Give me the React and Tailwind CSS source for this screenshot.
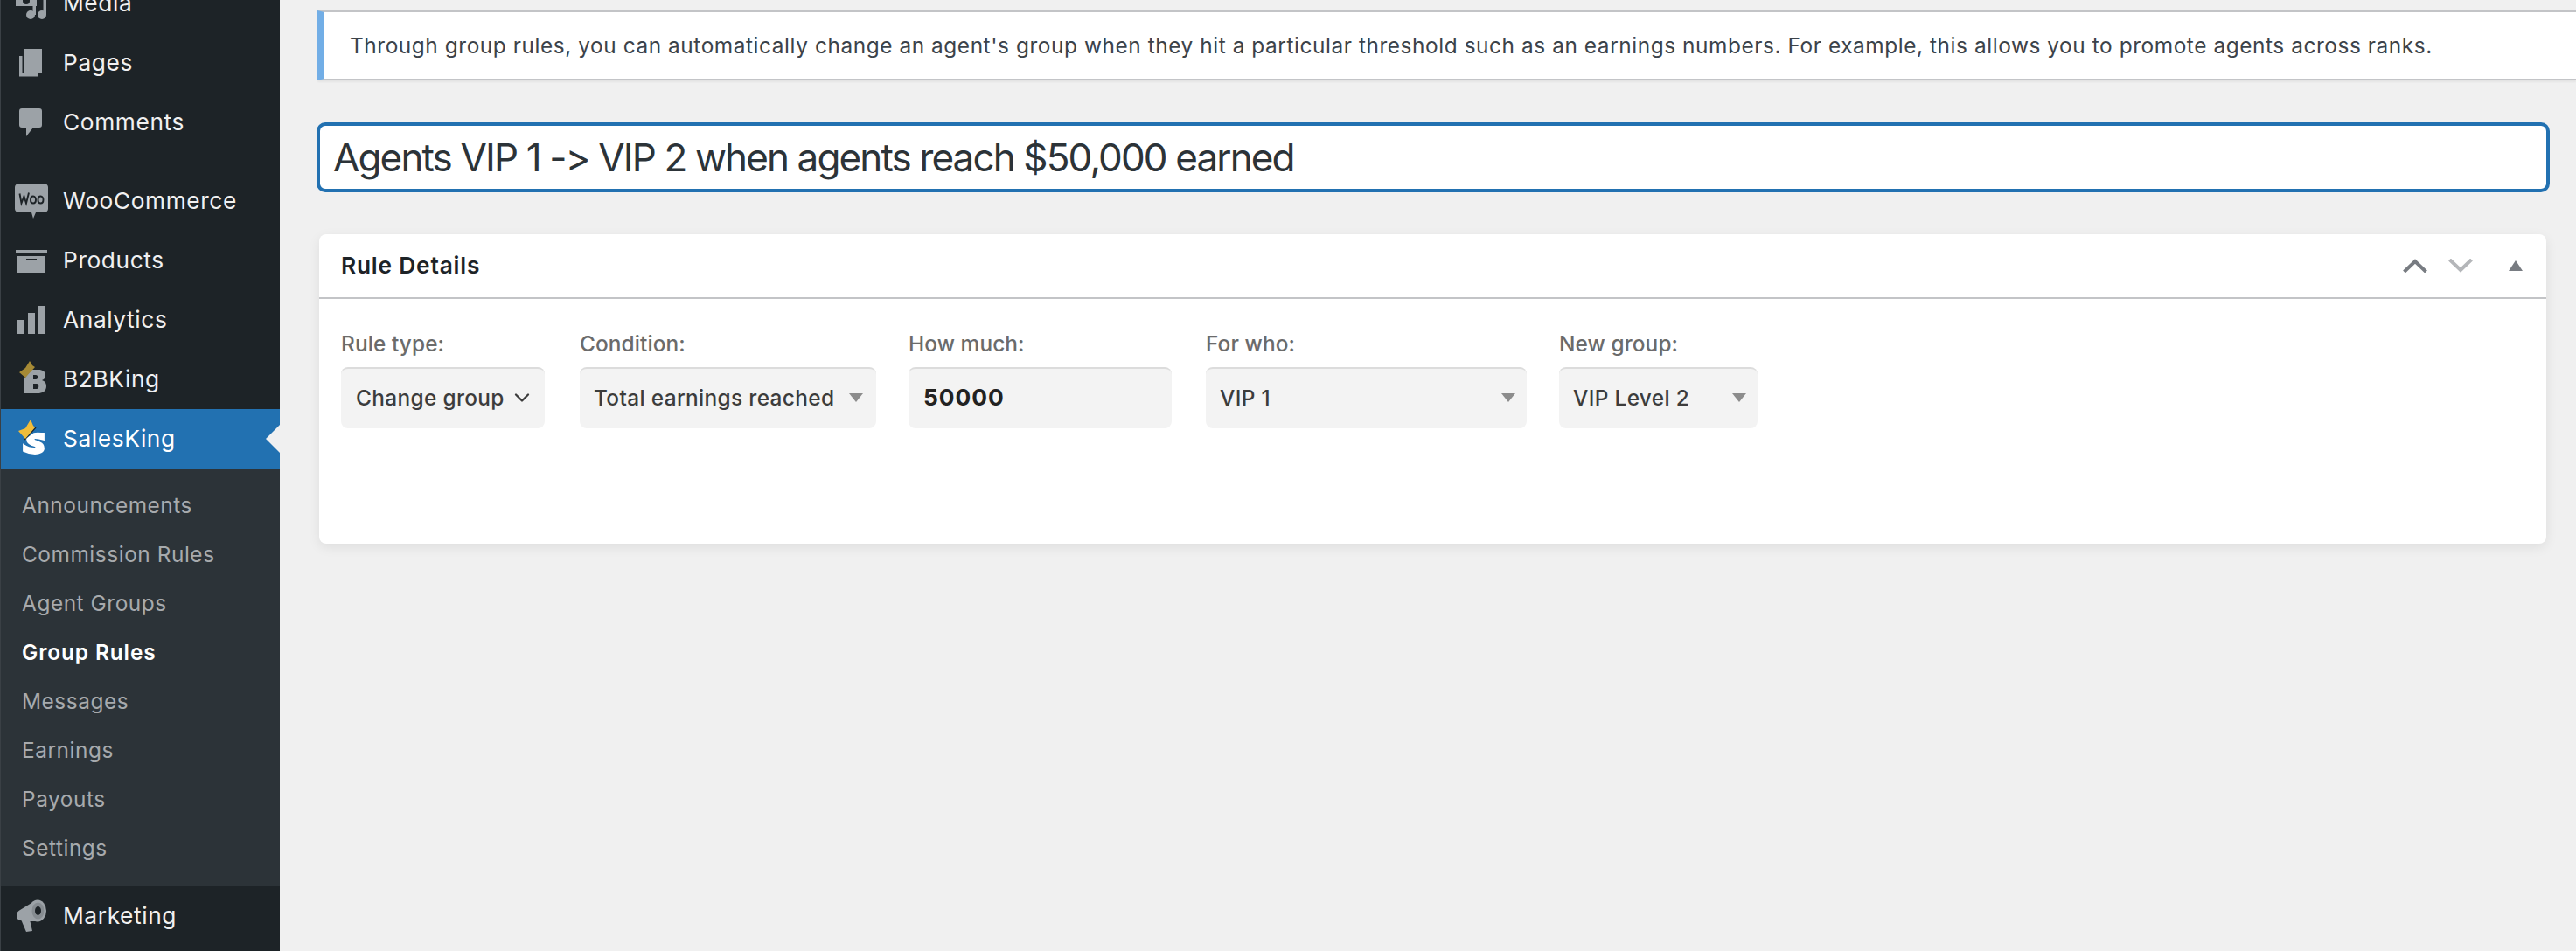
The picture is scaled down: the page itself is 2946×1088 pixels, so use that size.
import React from "react";
import { ChevronDown } from "lucide-react";

const MediaIcon = () => (
    <svg viewBox="0 0 40 40" className="w-10 h-10 fill-[#9ca2a7]">
        <path d="M3 0h24v23H3z" />
        <circle cx="15" cy="17" r="4" className="fill-[#1d2327]" />
        <circle cx="20" cy="33" r="5" />
        <circle cx="33" cy="33" r="5" />
        <path d="M22.5 20h3.500v13h-3.500zM34.500 2h3.500v31h-3.500z" />
    </svg>
);

const PagesIcon = () => (
    <svg viewBox="0 0 40 40" className="w-10 h-10 fill-[#9ca2a7]">
        <path d="M12 4h21v27H12z" />
        <path d="M7 12h3.500v20H28v3.500H7z" />
    </svg>
);

const CommentsIcon = () => (
    <svg viewBox="0 0 40 40" className="w-10 h-10 fill-[#9ca2a7]">
        <path d="M10 4h20c2 0 3 1 3 3v16c0 2-1 3-3 3h-7l-8 10V26h-5c-2 0-3-1-3-3V7c0-2 1-3 3-3z" />
    </svg>
);

const WooIcon = () => (
    <svg viewBox="0 0 40 40" className="w-10 h-10">
        <path
            className="fill-[#9ca2a7]"
            d="M6 0h30c2 0 4 2 4 4v25c0 2-2 4-4 4H26l-3 7-2-7H6c-2 0-4-2-4-4V4c0-2 2-4 4-4z"
        />
        <path
            className="fill-none stroke-[#1d2327]"
            strokeWidth="1.900"
            d="M7.500 11.500l2 11 3-8 2.500 8 3-12M23 14.500c-2.500 0-3 3-3 4.500s.7 3.500 3 3.500 3-2 3-4-1-4-3-4zM31.500 14.500c-2.500 0-3 3-3 4.500s.7 3.500 3 3.500 3-2 3-4-1-4-3-4z"
        />
    </svg>
);

const ProductsIcon = () => (
    <svg viewBox="0 0 40 40" className="w-10 h-10 fill-[#9ca2a7]">
        <path d="M3 8h36v4H3z" />
        <path fillRule="evenodd" d="M5 15h32v19H5zM15 18v2h12v-2z" />
    </svg>
);

const AnalyticsIcon = () => (
    <svg viewBox="0 0 40 40" className="w-10 h-10 fill-[#9ca2a7]">
        <path d="M5 20h8v16H5zM17 12h8v24h-8zM29 4h8v32h-8z" />
    </svg>
);

const B2BIcon = () => (
    <svg viewBox="0 0 40 40" className="w-10 h-10 overflow-visible">
        <path
            className="fill-[#9ca2a7]"
            fillRule="evenodd"
            d="M21 9h8c5 0 8 2 8 7 0 3-2 4-4 5 3 1 5 3 5 7 0 6-5 8-10 8H13V19zM23 15v5h3c3 0 3-5 0-5zM23 25v6h4c3 0 3-6 0-6z"
        />
        <path className="fill-[#a68a35]" d="M7 12l7-5 5-8 3 5 3 2-11 12z" />
    </svg>
);

const SalesIcon = () => (
    <svg viewBox="0 0 40 40" className="w-10 h-10 overflow-visible">
        <path
            className="fill-white stroke-white"
            strokeWidth="1.800"
            d="M35 14v7c-3-1-7-2-10-2-2 0-2 2 0 3 5 2 10 3 10 9 0 4-5 6-10 6-5 0-9-1-13-3v-7c3 2 8 4 12 4 3 0 3-2 1-3-5-1-9-3-9-8l8-6c4-1 8 0 11 0z"
        />
        <path className="fill-none stroke-[#1d2327]" strokeWidth="1.400" d="M13 21L26 7" />
        <path className="fill-[#f1bd3a]" d="M6 11l8-3 6-10 3 7 2 2-11 13z" />
    </svg>
);

const MarketingIcon = () => (
    <svg viewBox="0 0 40 40" className="w-10 h-10 fill-[#9ca2a7]">
        <path d="M4 19c0-3 2-5 4-6L26 2l2 24-9 0-11-1c-2 0-4-3-4-6z" />
        <path d="M9 24h10l3 13-7 1z" />
        <ellipse cx="28" cy="14" rx="10" ry="12.500" />
        <ellipse cx="28.500" cy="14" rx="7" ry="9.500" className="fill-[#868c91]" />
        <ellipse cx="28.500" cy="14" rx="3.500" ry="5" className="fill-[#1d2327]" />
    </svg>
);

const TopItem = ({ icon, label, className = "" }) => (
    <div className={`h-[68px] flex items-center text-[26.3px] tracking-[0.6px] text-[#f0f0f1] ${className}`}>
        <div className="w-[71px] pl-[14px] flex-none">{icon}</div>
        <span className="leading-none">{label}</span>
    </div>
);

const subItems = ["Announcements", "Commission Rules", "Agent Groups", "Group Rules", "Messages", "Earnings", "Payouts", "Settings"];

const Triangle = ({ className = "" }) => (
    <span className={`w-0 h-0 border-x-[8px] border-x-transparent border-t-[10px] border-t-[#8c8c8c] flex-none ${className}`} />
);

const Field = ({ label, width, margin, children }) => (
    <div className={`flex-none ${width} ${margin}`}>
        <div className="h-[26px] flex items-center text-[24.4px] tracking-[0.1px] font-medium text-[#6b6b6b] leading-none whitespace-nowrap">{label}</div>
        <div className="mt-[14px] h-[70px] pb-[2px] flex items-center bg-[#f3f3f3] border-t-2 border-[#dcdcdc] rounded-[8px] text-[24.4px] tracking-[0.35px] font-medium text-[#3c3c3c] whitespace-nowrap">
            {children}
        </div>
    </div>
);

export default function App() {
    return (
        <div className="h-[1088px] overflow-hidden flex bg-[#f0f0f0] font-['Inter',sans-serif]">
            {/* Admin menu */}
            <aside className="w-[320px] flex-none bg-[#1d2327] border-l border-[#3a4045] -mt-[30px]">
                <TopItem icon={<MediaIcon />} label="Media" />
                <TopItem icon={<PagesIcon />} label="Pages" />
                <TopItem icon={<CommentsIcon />} label="Comments" />
                <div className="h-[22px]" />
                <TopItem icon={<WooIcon />} label="WooCommerce" />
                <TopItem icon={<ProductsIcon />} label="Products" />
                <TopItem icon={<AnalyticsIcon />} label="Analytics" />
                <TopItem icon={<B2BIcon />} label="B2BKing" />
                <div className="relative">
                    <TopItem icon={<SalesIcon />} label="SalesKing" className="bg-[#2271b1] text-white" />
                    <span className="absolute right-0 top-[18px] w-0 h-0 border-y-[16px] border-y-transparent border-r-[16px] border-r-[#f0f0f1]" />
                </div>
                <div className="bg-[#2c3338] h-[478px] pt-[14px]">
                    {subItems.map((item) => (
                        <div
                            key={item}
                            className={`h-[56px] flex items-center pl-6 text-[24.4px] ${
                                item === "Group Rules" ? "text-white font-semibold tracking-[0.9px]" : "text-[#a7aaad] tracking-[0.55px]"
                            }`}
                        >
                            {item}
                        </div>
                    ))}
                </div>
                <TopItem icon={<MarketingIcon />} label="Marketing" />
            </aside>

            {/* Content */}
            <main className="flex-1 min-w-0 pl-[43px] pt-3">
                {/* Notice */}
                <div className="h-[80px] flex items-center bg-white border-y-2 border-[#c3c4c7] border-l-[8px] border-l-[#72aee6] pl-[29px] text-[24.4px] tracking-[0.57px] text-[#3c434a] whitespace-nowrap shadow-[0_2px_2px_rgba(0,0,0,0.05)]">
                    Through group rules, you can automatically change an agent's group when they hit a particular threshold such as an earnings numbers. For example, this allows you to promote agents across ranks.
                </div>

                {/* Title */}
                <div className="mt-12 mr-[30px] -ml-[1px] h-[80px] flex items-center bg-white border-4 border-[#2271b1] rounded-[10px] pl-[15px] text-[44px] tracking-[-1.87px] [font-feature-settings:'calt'_0] text-[#2c3338] whitespace-nowrap">
                    Agents VIP 1 -&gt; VIP 2 when agents reach $50,000 earned
                </div>

                {/* Rule details card */}
                <section className="mt-12 ml-[2px] mr-[34px] h-[354px] bg-white rounded-[8px] shadow-[0_4px_14px_rgba(0,0,0,0.08)]">
                    <header className="h-[74px] flex items-center border-b-2 border-[#c3c4c7] pl-[25px]">
                        <h2 className="text-[26.3px] tracking-[0.8px] font-semibold text-[#1d2327] leading-none">Rule Details</h2>
                        <div className="ml-auto flex items-center">
                            <svg viewBox="0 0 28 16" className="w-7 h-4 fill-none stroke-[#787c82]" strokeWidth="4">
                                <path d="M1.5 15L14 3l12.5 12" />
                            </svg>
                            <svg viewBox="0 0 28 16" className="w-7 h-4 ml-6 fill-none stroke-[#b4b6b9]" strokeWidth="4">
                                <path d="M1.5 1L14 13 26.5 1" />
                            </svg>
                            <span className="ml-[41px] mr-[27px] w-0 h-0 border-x-[8px] border-x-transparent border-b-[12px] border-b-[#787c82]" />
                        </div>
                    </header>
                    <div className="pl-[25px] pt-[38px] flex">
                        <Field label="Rule type:" width="w-[233px]" margin="mr-[40px]">
                            <span className="pl-[17px]">Change group</span>
                            <ChevronDown className="ml-auto mr-[12px] w-[28px] h-[28px] text-[#3c3c3c]" strokeWidth={2} />
                        </Field>
                        <Field label="Condition:" width="w-[339px]" margin="mr-[37px]">
                            <span className="pl-4">Total earnings reached</span>
                            <Triangle className="ml-auto mr-[15px]" />
                        </Field>
                        <Field label="How much:" width="w-[301px]" margin="mr-[39px]">
                            <span className="pl-[17px] text-[26.3px] font-bold text-[#222] tracking-[1px]">50000</span>
                        </Field>
                        <Field label="For who:" width="w-[367px]" margin="mr-[37px]">
                            <span className="pl-4">VIP 1</span>
                            <Triangle className="ml-auto mr-[13px]" />
                        </Field>
                        <Field label="New group:" width="w-[227px]" margin="">
                            <span className="pl-4">VIP Level 2</span>
                            <Triangle className="ml-auto mr-[13px]" />
                        </Field>
                    </div>
                </section>
            </main>
        </div>
    );
}
